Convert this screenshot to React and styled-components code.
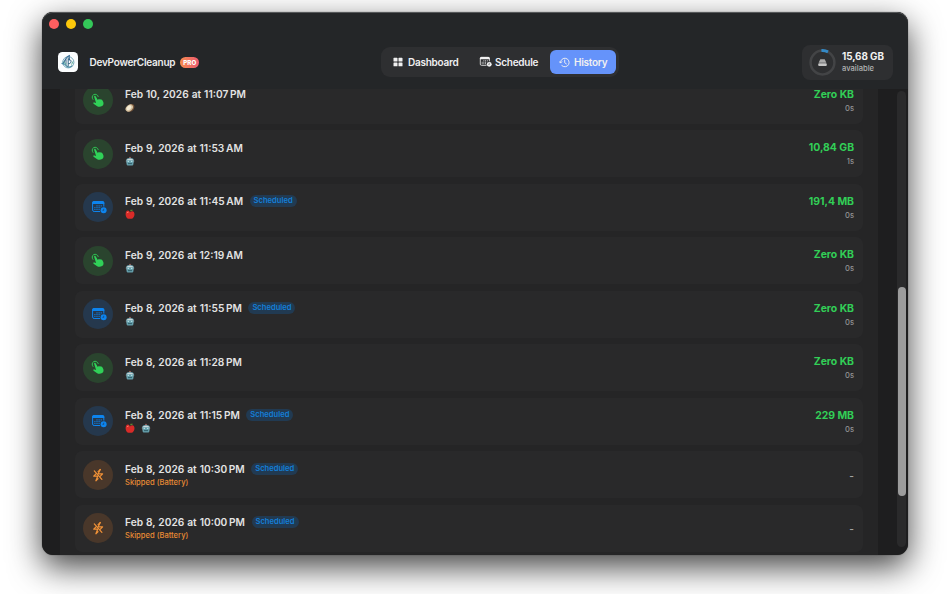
import React from 'react';
import styled, { createGlobalStyle } from 'styled-components';

const GlobalStyle = createGlobalStyle`
  * {
    box-sizing: border-box;
  }

  body {
    margin: 0;
    background: #fff;
    font-family: Inter, 'Liberation Sans', sans-serif;
    overflow: hidden;
  }
`;

const Desktop = styled.div`
  width: 950px;
  height: 594px;
  padding: 12px 42px 39px;
  overflow: hidden;
`;

const Window = styled.div`
  display: flex;
  flex-direction: column;
  height: 543px;
  border-radius: 11px;
  overflow: hidden;
  background: #1e1e1f;
  box-shadow: 0 0 1px rgba(0, 0, 0, 0.7), 0 12px 33px rgba(0, 0, 0, 0.74);
`;

const Header = styled.header`
  flex: none;
  height: 77px;
  border-radius: 11px 11px 0 0;
  background: #242628;
  box-shadow: inset 0 1px 0 #56585a;
`;

const TrafficLights = styled.div`
  display: flex;
  gap: 7px;
  padding: 7px 0 0 7px;
`;

const Light = styled.span`
  width: 10px;
  height: 10px;
  border-radius: 50%;
  background: ${(p) => p.$color};
`;

const Toolbar = styled.div`
  display: grid;
  grid-template-columns: 323px 254px 1fr;
  align-items: center;
  height: 36px;
  margin: 15px 15px 0 16px;
`;

const Brand = styled.div`
  display: flex;
  align-items: center;
`;

const AppIcon = styled.div`
  display: grid;
  place-items: center;
  width: 20px;
  height: 20px;
  margin-right: 11.5px;
  border-radius: 4.5px;
  background: #fbfdfe;
`;

const AppName = styled.h1`
  margin: 0;
  color: #eee;
  font-size: 10px;
  letter-spacing: -0.25px;
  line-height: 14px;
  font-weight: 600;
  white-space: nowrap;
`;

const ProBadge = styled.span`
  margin-left: 5px;
  width: 19px;
  height: 11px;
  border-radius: 6px;
  background: linear-gradient(90deg, #f58c50, #ee5a70);
  color: #fff;
  font-size: 6.2px;
  line-height: 11px;
  font-weight: 800;
  text-align: center;
`;

const Tabs = styled.nav`
  display: flex;
  align-items: center;
  width: 238px;
  height: 30px;
  padding: 3px;
  border-radius: 9px;
  background: #2e2f31;
`;

const Tab = styled.button`
  display: flex;
  align-items: center;
  gap: ${(p) => p.$gap || 4}px;
  width: ${(p) => p.$width}px;
  height: 24px;
  padding: 0 0 0 9px;
  border: none;
  border-radius: 6px;
  background: ${(p) => (p.$active ? '#6593fa' : 'transparent')};
  color: #f0f0f1;
  font-family: inherit;
  font-size: 10px;
  letter-spacing: -0.26px;
  font-weight: 600;
  white-space: nowrap;
`;

const Storage = styled.div`
  display: flex;
  align-items: center;
  justify-self: end;
  gap: 6px;
  width: 91px;
  height: 35px;
  padding-left: 7px;
  border-radius: 8px;
  background: #2e2f31;
`;

const StorageAmount = styled.div`
  color: #f2f2f2;
  font-size: 9.9px;
  letter-spacing: -0.08px;
  line-height: 13px;
  font-weight: 700;
  white-space: nowrap;
`;

const StorageLabel = styled.div`
  padding-top: 0.5px;
  color: #b1b2b3;
  font-size: 7.6px;
  line-height: 10px;
  font-weight: 500;
`;

const Body = styled.main`
  display: flex;
  flex: 1;
  min-height: 0;
  padding-left: 18px;
`;

const Panel = styled.section`
  width: 818px;
  padding: 0 15px;
  background: #252526;
  overflow: hidden;
`;

const List = styled.div`
  display: flex;
  flex-direction: column;
  gap: 6.5px;
  margin-top: -12.5px;
`;

const Row = styled.article`
  display: flex;
  align-items: center;
  flex: none;
  height: 47px;
  padding: 0 9px 0 8px;
  border-radius: 7px;
  background: #29292a;
`;

const RowIcon = styled.div`
  display: grid;
  place-items: center;
  width: 30px;
  height: 30px;
  border-radius: 50%;
  background: ${(p) => p.$bg};
  color: ${(p) => p.$color};
`;

const Info = styled.div`
  flex: 1;
  margin-left: 12px;
  padding-top: 1.5px;
`;

const TitleLine = styled.div`
  display: flex;
  align-items: center;
  gap: 6.5px;
  height: 14px;
`;

const DateText = styled.span`
  color: #e3e3e3;
  font-size: 10.2px;
  word-spacing: 0.4px;
  line-height: 14px;
  font-weight: 600;
  white-space: nowrap;
`;

const Scheduled = styled.span`
  width: 47px;
  height: 12px;
  margin-top: -0.5px;
  border-radius: 6px;
  background: #213a52;
  color: #147fd8;
  font-size: 7.6px;
  line-height: 12px;
  font-weight: 600;
  text-align: center;
`;

const Details = styled.div`
  display: flex;
  gap: 6px;
  height: 13px;
  align-items: center;
`;

const Skipped = styled.span`
  color: #e78b35;
  font-size: 7.6px;
  font-weight: 500;
`;

const Result = styled.div`
  padding-top: 2.5px;
  text-align: right;
`;

const Freed = styled.div`
  color: #32cf57;
  font-size: 10.4px;
  line-height: 14px;
  font-weight: 700;
`;

const Duration = styled.div`
  color: #929293;
  font-size: 7.6px;
  line-height: 13px;
  font-weight: 500;
`;

const Dash = styled.div`
  color: #a2a2a2;
  font-size: 10px;
  font-weight: 600;
  line-height: 14px;
`;

const ScrollTrack = styled.div`
  width: 9px;
  height: 456px;
  margin: 2px 0 0 19px;
  padding-top: 196px;
  border-radius: 5px;
  background: #2a2a2b;
`;

const ScrollThumb = styled.div`
  width: 8px;
  height: 209px;
  margin: 0 auto;
  border-radius: 4px;
  background: #9c9c9c;
`;

const Logo = () => (
  <svg width="16" height="16" viewBox="0 0 16 16" fill="none">
    <circle cx="8.3" cy="8.3" r="5.6" stroke="#78a9bb" strokeWidth="1" />
    <path d="M3 10.5C4 7 7 2.5 9.3 1.6c-.6 2 .5 3 .2 4.7" stroke="#386c94" strokeWidth="1.1" />
    <path d="M1.5 9.5c2.4-.7 3.4.3 4.7 2.2 1.2 1.8 3.7 2 6 .1" stroke="#4c8da5" strokeWidth="1.3" />
    <path d="M6 5.4v5M8.2 3.7v8.8" stroke="#326383" strokeWidth="1" />
    <path d="M8.2 5.7c3.8-1 3.8 4.4 0 4" stroke="#326383" strokeWidth="1" />
    <path d="M3.5 7.5l3 3M11.6 10.7l1.2-3.2" stroke="#65b4a0" strokeWidth="1" />
  </svg>
);

const DashboardIcon = () => (
  <svg width="10" height="10" viewBox="0 0 10 10" fill="currentColor">
    <rect x=".5" y=".8" width="4" height="3.8" rx=".6" />
    <rect x="5.5" y=".8" width="4" height="3.8" rx=".6" />
    <rect x=".5" y="5.5" width="4" height="3.8" rx=".6" />
    <rect x="5.5" y="5.5" width="4" height="3.8" rx=".6" />
  </svg>
);

const CalendarIcon = ({ width = 16, cutout = '#25384d' }) => (
  <svg width={width} height={width * 0.875} viewBox="0 0 16 14" fill="none">
    <rect x="1.6" y="1.6" width="11.2" height="9.9" rx="1.5" stroke="currentColor" strokeWidth="1" />
    <path d="M1.1 3.9V3C1.1 1.8 1.8 1.1 3 1.1h8.4c1.2 0 1.9.7 1.9 1.9v.9z" fill="currentColor" />
    <path
      d="M5.5 5.9h1M7.6 5.9h1M9.7 5.9h1M3.4 7.7h1M5.5 7.7h1M7.6 7.7h1M9.7 7.7h1M3.4 9.5h1M5.5 9.5h1M7.6 9.5h1"
      stroke="currentColor"
      strokeWidth="1.2"
    />
    <circle cx="12.6" cy="10.3" r="3.7" fill={cutout} />
    <circle cx="12.6" cy="10.3" r="3" fill="currentColor" />
    <path d="M12.7 8.8v1.6h-1.2" stroke={cutout} strokeWidth=".6" />
  </svg>
);

const ShiftedIcon = styled.span`
  display: grid;
  padding-left: 2px;
`;

const HistoryIcon = () => (
  <svg
    width="11"
    height="11"
    viewBox="0 0 11 11"
    fill="none"
    stroke="currentColor"
    strokeWidth=".95"
    strokeLinecap="round"
    strokeLinejoin="round"
  >
    <path d="M1.5 5.6a4.3 4.3 0 1 1 1.3 3" />
    <path d="M.4 4.7l1.1 1.4 1.3-1.3M5.7 3v2.7l1.7 1.2" />
  </svg>
);

const TapIcon = () => (
  <svg width="14" height="15" viewBox="0 0 14 15" fill="none">
    <path d="M1.9 6.4A3.1 3.1 0 1 1 7.2 3.5" stroke="currentColor" strokeWidth=".9" strokeLinecap="round" />
    <path
      d="M3.2 3.9c-.4-.8.9-1.5 1.4-.7l2.2 3.7c.2-.6.9-.7 1.3-.3.4-.5 1.1-.5 1.5 0 .6-.4 1.3-.2 1.6.4l.7 1.3c1 1.8.9 3.8-.8 4.8-1.8 1.1-3.8.9-5.3-.2l-3.2-2.2c-.7-.6-.1-1.5.7-1.3l1.8.5z"
      fill="currentColor"
    />
  </svg>
);

const BoltSlashIcon = () => (
  <svg width="14" height="16" viewBox="0 0 14 16" fill="none" stroke="currentColor" strokeLinejoin="round">
    <path d="M9.5 2.2L7.1 6.8h4.5L8.9 9.7M5.5 6.4L2.7 9.2h4L4.9 13.8l2.5-2.5" strokeWidth="1.2" />
    <path d="M9.5 2.2L6.7 5.1" strokeWidth="1.2" />
    <path d="M3.3 3.9l7.6 8.5" strokeWidth="1.2" strokeLinecap="round" />
  </svg>
);

const StorageRing = () => (
  <svg width="27" height="27" viewBox="0 0 27 27" fill="none">
    <circle cx="13.5" cy="13.5" r="11.9" stroke="#434446" strokeWidth="2.5" />
    <path d="M12.4 1.6A11.9 11.9 0 0 1 19 2.9" stroke="#3489c6" strokeWidth="2.9" />
    <path d="M11.3 10.2h4.4l1.7 3.6H9.6z" fill="#aaa" />
    <rect x="9.2" y="14.2" width="8.6" height="2.7" rx="1" fill="#c5c5c5" />
  </svg>
);

const Apple = () => (
  <svg width="10" height="11" viewBox="0 0 10 11">
    <path d="M5 3.2C3-.1.6 1.8.6 5.2c0 2.6 1.8 4.8 3.2 4.5h2.4c1.7.2 3.3-2.1 3.3-4.5C9.5 1.8 7 1.4 5 3.2z" fill="#d92b28" />
    <path d="M2.1 4.1c.3-.8.9-1.1 1.4-1" stroke="#ff8e78" strokeWidth="1" fill="none" />
    <path d="M4.9 3.2L5.8.5" stroke="#6d4328" strokeWidth=".8" />
    <path d="M5.2 1.9C6 .4 7.4.4 8 1c-.8 1-1.7 1.2-2.8.9z" fill="#579a35" />
  </svg>
);

const Robot = () => (
  <svg width="10" height="11" viewBox="0 0 10 11">
    <circle cx="5" cy="1.5" r=".8" fill="#b4706a" />
    <rect x=".8" y="3.8" width="8.4" height="2.8" rx="1" fill="#8b7371" />
    <path d="M1.2 4.4C1.2 2.8 2.6 2.1 5 2.1s3.8.7 3.8 2.3l-.4 3.9c-.1.8-.8 1.2-1.5 1.2H3.1c-.7 0-1.4-.4-1.5-1.2z" fill="#659eaa" />
    <path d="M1.7 4.2c.7-1.9 5.9-1.9 6.6 0z" fill="#cbd7da" />
    <rect x="2.5" y="4.7" width="1.6" height="1.2" rx=".6" fill="#b8e3e6" />
    <rect x="5.9" y="4.7" width="1.6" height="1.2" rx=".6" fill="#b8e3e6" />
    <path d="M3 7.6h4" stroke="#2c5963" strokeWidth=".9" />
  </svg>
);

const Coconut = () => (
  <svg width="10" height="10" viewBox="0 0 10 10">
    <path d="M1.1 7.6C-.2 5.5 3.7 1 6.3 1.1 8.6.8 10.1 2.7 9 5.4 7.9 8.5 3.4 10.2 1.1 7.6z" fill="#75543a" />
    <ellipse cx="4.3" cy="5" rx="4.2" ry="3" transform="rotate(-42 4.3 5)" fill="#d0bd9c" />
    <ellipse cx="4" cy="4.9" rx="2.9" ry="1.9" transform="rotate(-42 4 4.9)" fill="#f4ead4" />
  </svg>
);

const emojis = { apple: Apple, robot: Robot, coconut: Coconut };

const kinds = {
  manual: { bg: '#2a442e', color: '#30d158', icon: <TapIcon /> },
  scheduled: { bg: '#25384d', color: '#0d84ee', icon: <ShiftedIcon><CalendarIcon /></ShiftedIcon> },
  skipped: { bg: '#49372a', color: '#f29237', icon: <BoltSlashIcon /> },
};

const entries = [
  { id: 1, kind: 'manual', date: 'Feb 10, 2026 at 11:07\u202fPM', tools: ['coconut'], freed: 'Zero KB', time: '0s' },
  { id: 2, kind: 'manual', date: 'Feb 9, 2026 at 11:53\u202fAM', tools: ['robot'], freed: '10,84 GB', time: '1s' },
  { id: 3, kind: 'scheduled', date: 'Feb 9, 2026 at 11:45\u202fAM', tools: ['apple'], freed: '191,4 MB', time: '0s' },
  { id: 4, kind: 'manual', date: 'Feb 9, 2026 at 12:19\u202fAM', tools: ['robot'], freed: 'Zero KB', time: '0s' },
  { id: 5, kind: 'scheduled', date: 'Feb 8, 2026 at 11:55\u202fPM', tools: ['robot'], freed: 'Zero KB', time: '0s' },
  { id: 6, kind: 'manual', date: 'Feb 8, 2026 at 11:28\u202fPM', tools: ['robot'], freed: 'Zero KB', time: '0s' },
  { id: 7, kind: 'scheduled', date: 'Feb 8, 2026 at 11:15\u202fPM', tools: ['apple', 'robot'], freed: '229 MB', time: '0s' },
  { id: 8, kind: 'skipped', date: 'Feb 8, 2026 at 10:30\u202fPM' },
  { id: 9, kind: 'skipped', date: 'Feb 8, 2026 at 10:00\u202fPM' },
];

const HistoryRow = ({ entry }) => {
  const kind = kinds[entry.kind];

  return (
    <Row>
      <RowIcon $bg={kind.bg} $color={kind.color}>{kind.icon}</RowIcon>
      <Info>
        <TitleLine>
          <DateText>{entry.date}</DateText>
          {entry.kind !== 'manual' && <Scheduled>Scheduled</Scheduled>}
        </TitleLine>
        <Details>
          {entry.kind === 'skipped' && <Skipped>Skipped (Battery)</Skipped>}
          {entry.tools?.map((tool) => {
            const Emoji = emojis[tool];
            return <Emoji key={tool} />;
          })}
        </Details>
      </Info>
      <Result>
        {entry.freed ? (
          <>
            <Freed>{entry.freed}</Freed>
            <Duration>{entry.time}</Duration>
          </>
        ) : (
          <Dash>-</Dash>
        )}
      </Result>
    </Row>
  );
};

const App = () => (
  <Desktop>
    <GlobalStyle />
    <Window>
      <Header>
        <TrafficLights>
          <Light $color="#ff5f60" />
          <Light $color="#fdc80b" />
          <Light $color="#34c759" />
        </TrafficLights>
        <Toolbar>
          <Brand>
            <AppIcon><Logo /></AppIcon>
            <AppName>DevPowerCleanup</AppName>
            <ProBadge>PRO</ProBadge>
          </Brand>
          <Tabs>
            <Tab $width={86} $gap={5}><DashboardIcon /> Dashboard</Tab>
            <Tab $width={80} $gap={3}><CalendarIcon width={13} cutout="#2e2f31" /> Schedule</Tab>
            <Tab $width={66} $active><HistoryIcon /> History</Tab>
          </Tabs>
          <Storage>
            <StorageRing />
            <div>
              <StorageAmount>15,68 GB</StorageAmount>
              <StorageLabel>available</StorageLabel>
            </div>
          </Storage>
        </Toolbar>
      </Header>
      <Body>
        <Panel>
          <List>
            {entries.map((entry) => (
              <HistoryRow key={entry.id} entry={entry} />
            ))}
          </List>
        </Panel>
        <ScrollTrack>
          <ScrollThumb />
        </ScrollTrack>
      </Body>
    </Window>
  </Desktop>
);

export default App;
